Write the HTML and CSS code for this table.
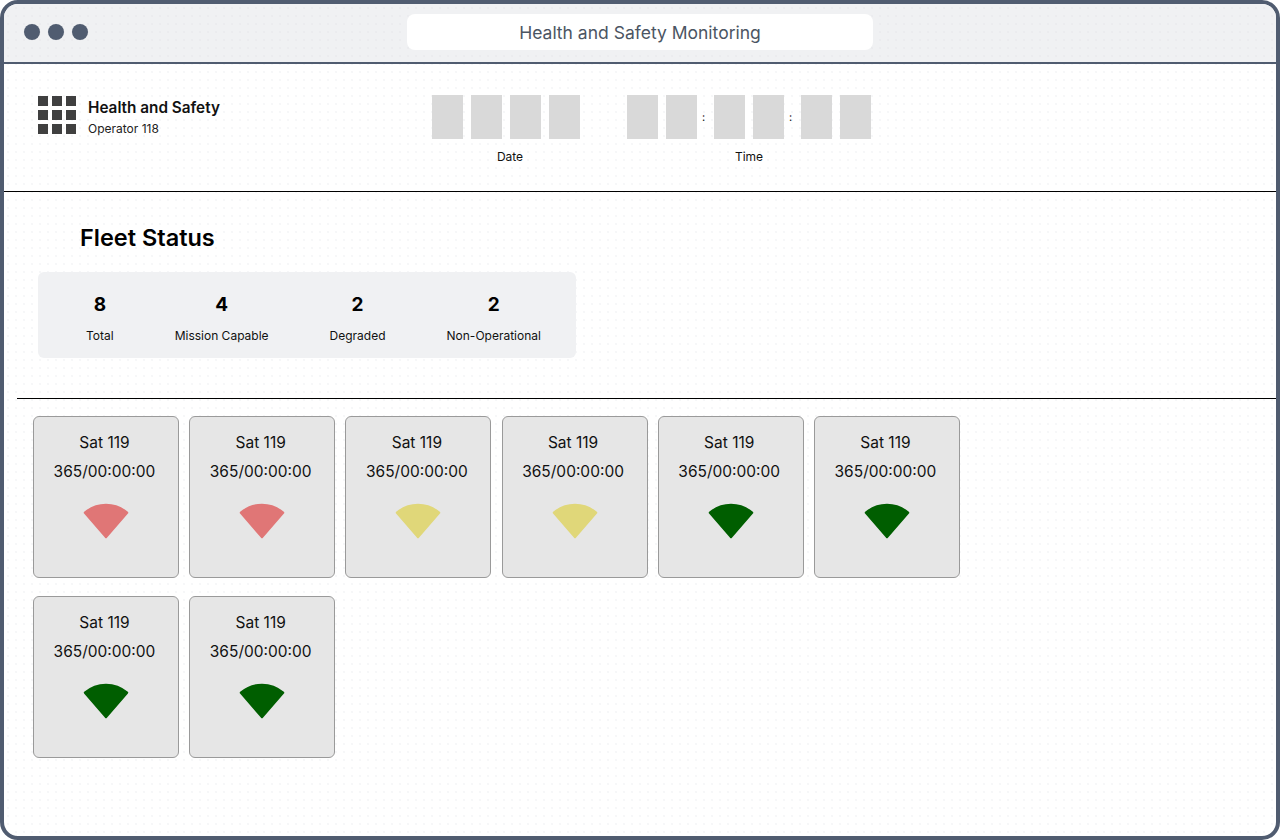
FILE: index.html
```html
<!DOCTYPE html>
<html lang="en">
<head>
<meta charset="utf-8">
<title>Health and Safety Monitoring</title>
<link rel="stylesheet" href="styles.css">
</head>
<body>
<div class="window">
  <div class="titlebar">
    <div class="dots"><span class="dot"></span><span class="dot"></span><span class="dot"></span></div>
    <div class="urlbox">Health and Safety Monitoring</div>
    <div></div>
  </div>

  <header class="header">
    <div class="brand">
      <div class="logo">
        <span></span><span></span><span></span>
        <span></span><span></span><span></span>
        <span></span><span></span><span></span>
      </div>
      <div class="brand-text">
        <div class="brand-title">Health and Safety</div>
        <div class="brand-sub">Operator 118</div>
      </div>
    </div>
    <div class="clock date">
      <div class="digits">
        <span class="digit"></span><span class="digit"></span><span class="digit"></span><span class="digit"></span>
      </div>
      <div class="clock-label date-label">Date</div>
    </div>
    <div class="clock time">
      <div class="digits">
        <span class="digit"></span><span class="digit"></span>
        <span class="colon">:</span>
        <span class="digit"></span><span class="digit"></span>
        <span class="colon">:</span>
        <span class="digit"></span><span class="digit"></span>
      </div>
      <div class="clock-label">Time</div>
    </div>
  </header>

  <section class="fleet">
    <h1 class="fleet-title">Fleet Status</h1>
    <div class="stats">
      <div class="stat"><div class="stat-num">8</div><div class="stat-label">Total</div></div>
      <div class="stat"><div class="stat-num">4</div><div class="stat-label">Mission Capable</div></div>
      <div class="stat"><div class="stat-num">2</div><div class="stat-label">Degraded</div></div>
      <div class="stat"><div class="stat-num">2</div><div class="stat-label">Non-Operational</div></div>
    </div>
  </section>

  <div class="divider"></div>

  <section class="sats">
    <div class="sat"><div class="sat-name">Sat 119</div><div class="sat-time">365/00:00:00</div>
      <svg class="wedge red" viewBox="0 0 46 36" width="46" height="36"><path d="M23 34 L2 9.8 A32 32 0 0 1 44 9.8 Z"/></svg></div>
    <div class="sat"><div class="sat-name">Sat 119</div><div class="sat-time">365/00:00:00</div>
      <svg class="wedge red" viewBox="0 0 46 36" width="46" height="36"><path d="M23 34 L2 9.8 A32 32 0 0 1 44 9.8 Z"/></svg></div>
    <div class="sat"><div class="sat-name">Sat 119</div><div class="sat-time">365/00:00:00</div>
      <svg class="wedge yellow" viewBox="0 0 46 36" width="46" height="36"><path d="M23 34 L2 9.8 A32 32 0 0 1 44 9.8 Z"/></svg></div>
    <div class="sat"><div class="sat-name">Sat 119</div><div class="sat-time">365/00:00:00</div>
      <svg class="wedge yellow" viewBox="0 0 46 36" width="46" height="36"><path d="M23 34 L2 9.8 A32 32 0 0 1 44 9.8 Z"/></svg></div>
    <div class="sat"><div class="sat-name">Sat 119</div><div class="sat-time">365/00:00:00</div>
      <svg class="wedge green" viewBox="0 0 46 36" width="46" height="36"><path d="M23 34 L2 9.8 A32 32 0 0 1 44 9.8 Z"/></svg></div>
    <div class="sat"><div class="sat-name">Sat 119</div><div class="sat-time">365/00:00:00</div>
      <svg class="wedge green" viewBox="0 0 46 36" width="46" height="36"><path d="M23 34 L2 9.8 A32 32 0 0 1 44 9.8 Z"/></svg></div>
    <div class="sat"><div class="sat-name">Sat 119</div><div class="sat-time">365/00:00:00</div>
      <svg class="wedge green" viewBox="0 0 46 36" width="46" height="36"><path d="M23 34 L2 9.8 A32 32 0 0 1 44 9.8 Z"/></svg></div>
    <div class="sat"><div class="sat-name">Sat 119</div><div class="sat-time">365/00:00:00</div>
      <svg class="wedge green" viewBox="0 0 46 36" width="46" height="36"><path d="M23 34 L2 9.8 A32 32 0 0 1 44 9.8 Z"/></svg></div>
  </section>
</div>
</body>
</html>
```

FILE: styles.css
```css
* { box-sizing: border-box; }

html, body {
  margin: 0;
  padding: 0;
  background: #ffffff;
}

body {
  font-family: Inter, "Noto Sans", "Liberation Sans", sans-serif;
  color: #111111;
}

.window {
  width: 1280px;
  height: 840px;
  border: 4px solid #505c70;
  border-radius: 18px;
  overflow: hidden;
  background-color: #ffffff;
  background-image: radial-gradient(circle, #f2f3f5 0.6px, transparent 0.9px);
  background-size: 8px 8px;
}

/* Title bar */
.titlebar {
  height: 60px;
  background-color: #f0f1f3;
  background-image: radial-gradient(circle, #e8e9ec 0.6px, transparent 0.9px);
  background-size: 8px 8px;
  border-bottom: 2px solid #505c70;
  display: grid;
  grid-template-columns: 1fr 466px 1fr;
  align-items: center;
  padding: 0 20px;
}

.dots {
  display: flex;
  gap: 8px;
  margin-top: -2px;
}

.dot {
  width: 16px;
  height: 16px;
  border-radius: 50%;
  background: #505c70;
}

.urlbox {
  height: 36px;
  margin-top: -3px;
  padding-top: 1px;
  background: #ffffff;
  border-radius: 8px;
  display: flex;
  align-items: center;
  justify-content: center;
  font-size: 17.5px;
  color: #4b5563;
}

/* Header */
.header {
  height: 128px;
  border-bottom: 1px solid #000000;
  display: flex;
  align-items: flex-start;
  padding: 31px 0 0 34px;
}

.brand {
  width: 394px;
  display: flex;
  align-items: flex-start;
  gap: 12px;
  padding-top: 1px;
}

.logo {
  display: grid;
  grid-template-columns: repeat(3, 10px);
  grid-auto-rows: 10px;
  gap: 4px;
}

.logo span {
  background: #404040;
}

.brand-text {
  padding-top: 3px;
}

.brand-title {
  font-size: 15.3px;
  font-weight: 600;
  line-height: 18px;
  color: #111111;
}

.brand-sub {
  font-size: 12px;
  line-height: 16px;
  margin-top: 4px;
  color: #222222;
}

.clock {
  display: flex;
  flex-direction: column;
  align-items: center;
}

.date {
  margin-right: 47px;
}

.digits {
  display: flex;
  align-items: center;
  gap: 8px;
}

.digit {
  width: 31px;
  height: 44px;
  background: #d9d9d9;
}

.colon {
  font-size: 11px;
  line-height: 12px;
  margin: 0 0 0 -4px;
  width: 5px;
  text-align: center;
  color: #111111;
}

.clock-label {
  margin-top: 10px;
  font-size: 12px;
  line-height: 16px;
  color: #111111;
}

.date-label {
  padding-left: 8px;
}

/* Fleet status */
.fleet {
  padding: 31px 0 40px 34px;
  height: 206px;
}

.fleet-title {
  margin: 0 0 20px 42px;
  font-size: 23.5px;
  line-height: 29px;
  font-weight: 600;
  color: #000000;
}

.stats {
  width: 538px;
  height: 86px;
  background: #f0f1f3;
  border-radius: 6px;
  display: flex;
  gap: 61px;
  padding: 22px 0 0 48px;
}

.stat {
  display: flex;
  flex-direction: column;
  align-items: center;
}

.stat-num {
  font-size: 19px;
  line-height: 22px;
  font-weight: 700;
  color: #000000;
}

.stat-label {
  margin-top: 12px;
  font-size: 12px;
  line-height: 16px;
  color: #111111;
}

.divider {
  height: 1px;
  background: #000000;
  margin-left: 13px;
}

/* Satellite cards */
.sats {
  display: grid;
  grid-template-columns: repeat(6, 146px);
  column-gap: 10.2px;
  row-gap: 18px;
  padding: 17px 0 0 29px;
}

.sat {
  height: 162px;
  background: #e6e6e6;
  border: 1px solid #9a9a9a;
  border-radius: 6px;
  display: flex;
  flex-direction: column;
  align-items: center;
  padding-top: 16px;
  padding-right: 3px;
}

.sat-name,
.sat-time {
  font-size: 15.5px;
  line-height: 20px;
  color: #111111;
}

.sat-time {
  margin-top: 9px;
}

.wedge {
  margin-top: 21px;
  margin-left: 3px;
  display: block;
}

.wedge path {
  stroke-width: 2.5;
  stroke-linejoin: round;
}

.wedge.red path { fill: #e07676; stroke: #e07676; }
.wedge.yellow path { fill: #e0d779; stroke: #e0d779; }
.wedge.green path { fill: #005e00; stroke: #005e00; }
```
